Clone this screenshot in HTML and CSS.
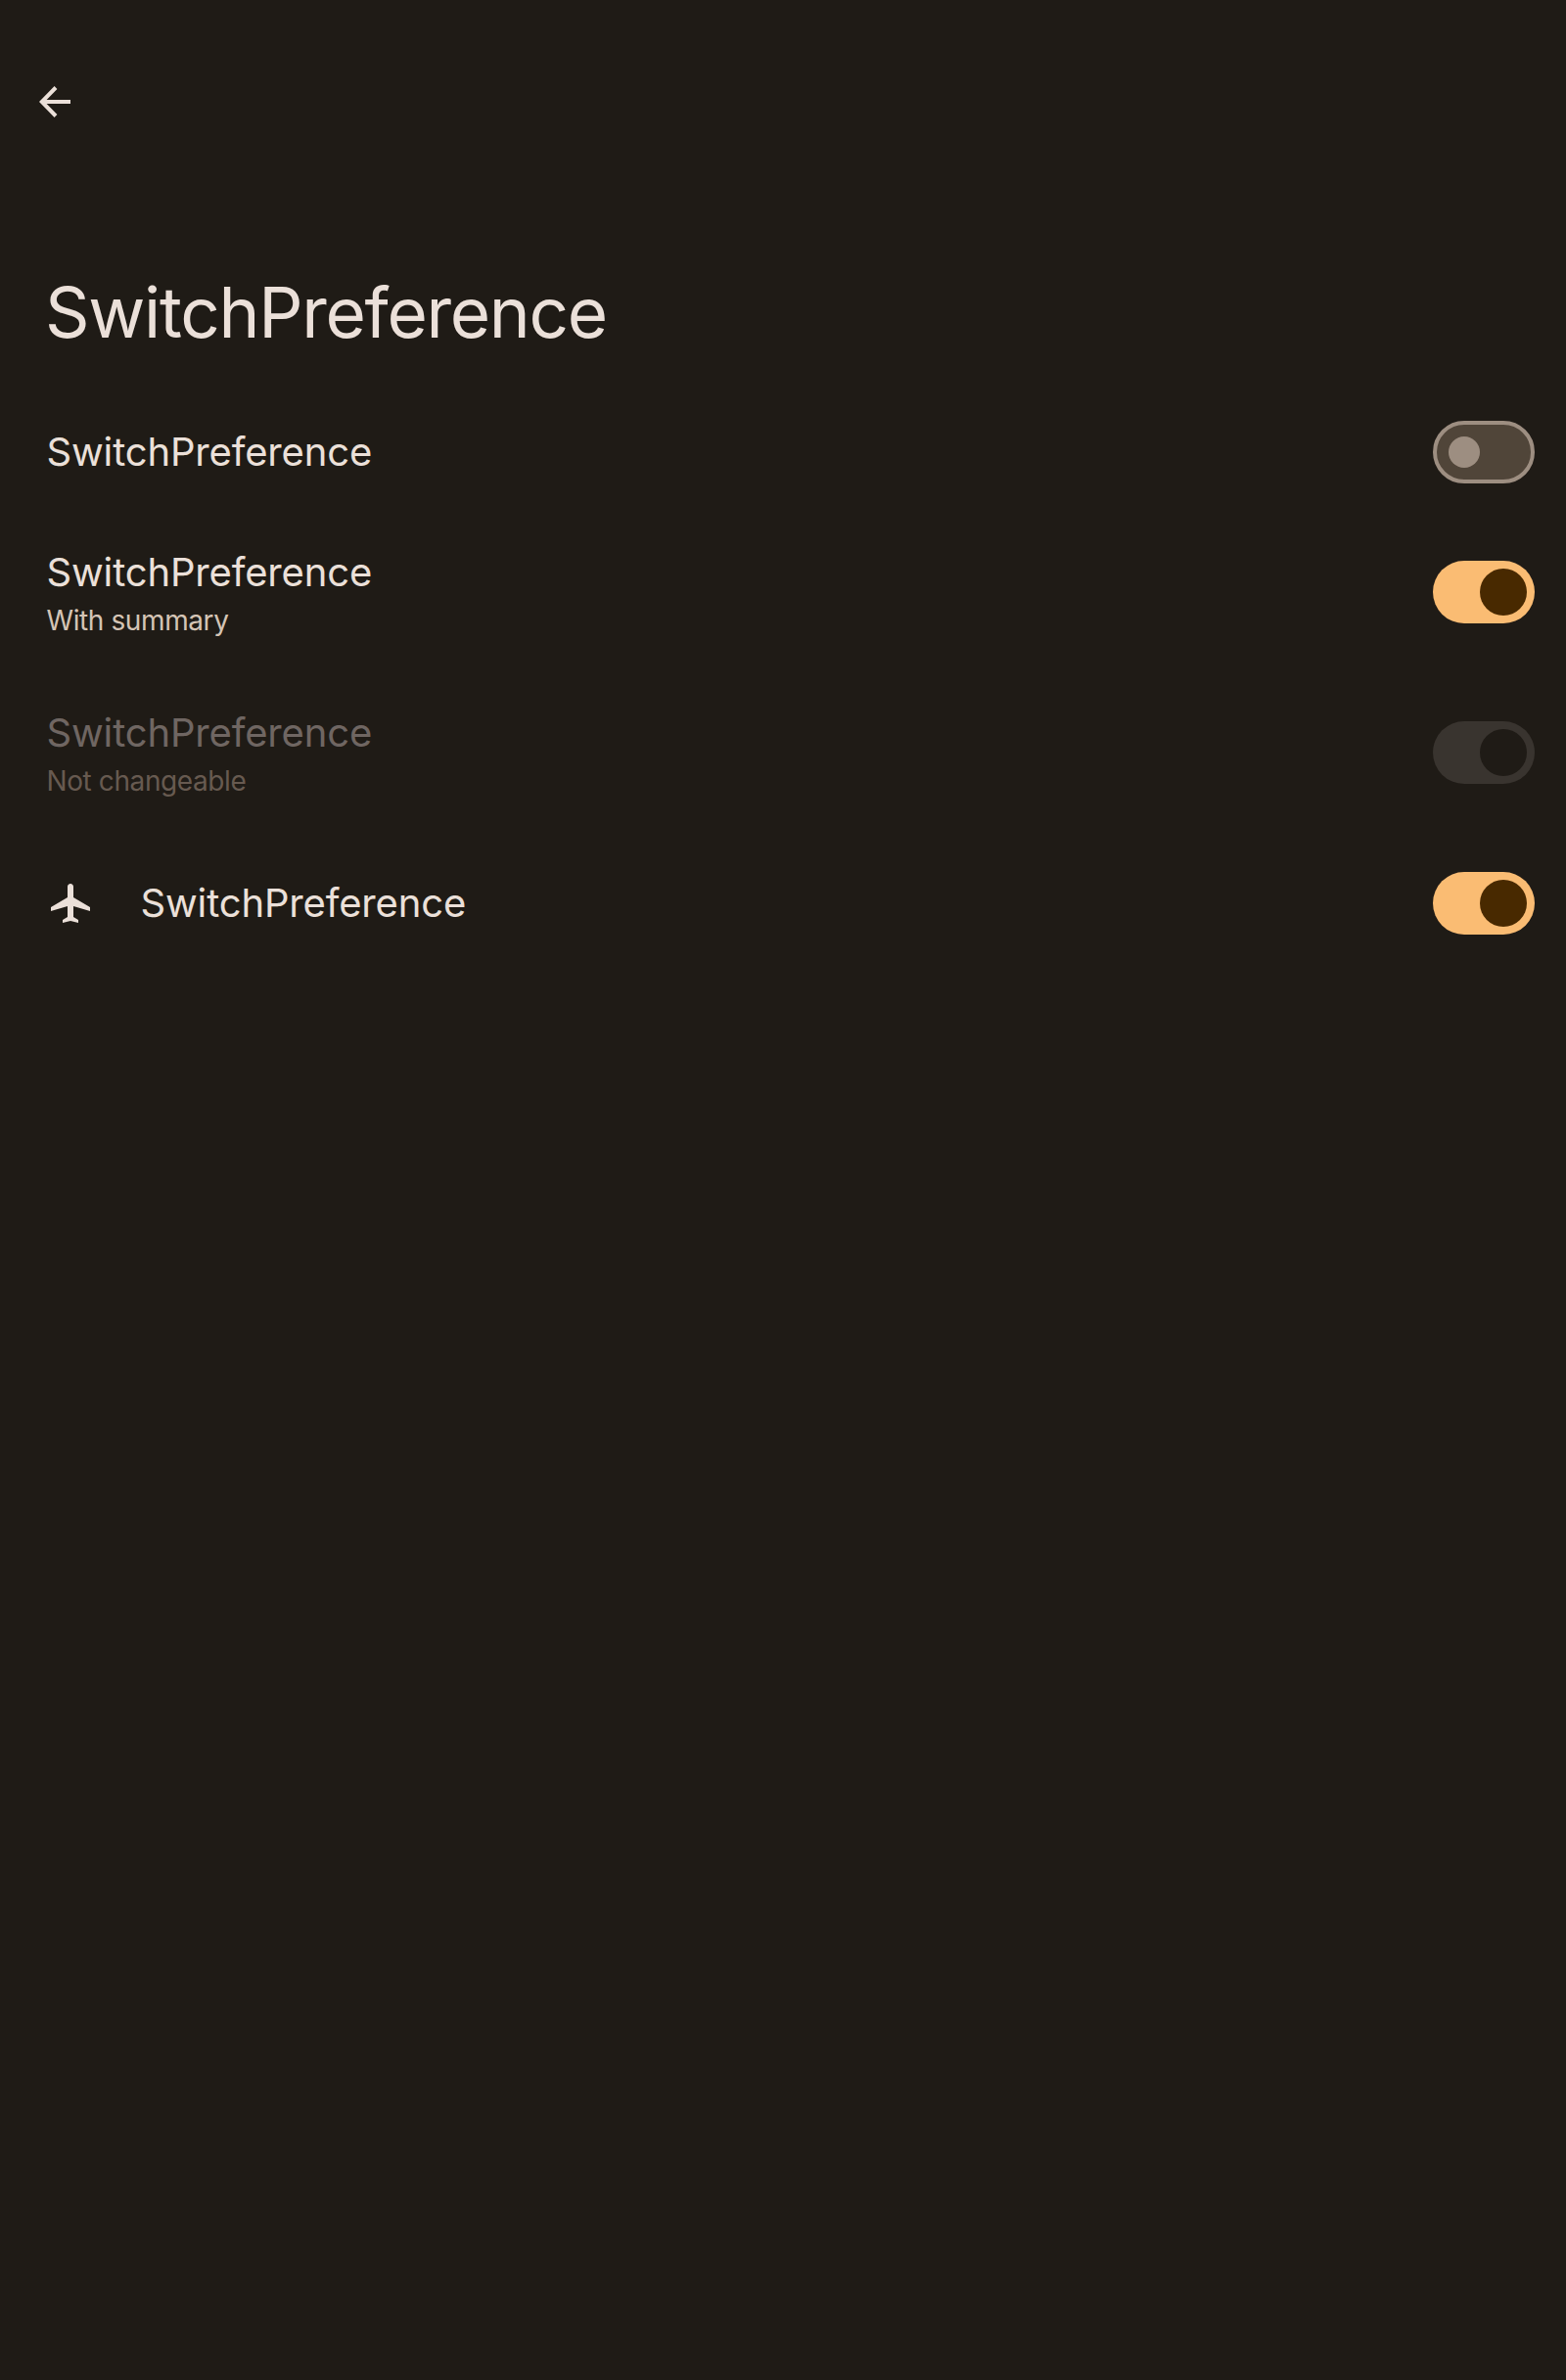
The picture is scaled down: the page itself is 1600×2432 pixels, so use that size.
FILE: index.html
```html
<!DOCTYPE html>
<html lang="en">
<head>
<meta charset="utf-8">
<title>SwitchPreference</title>
<link rel="stylesheet" href="styles.css">
</head>
<body>
<header class="toolbar">
  <svg class="back" viewBox="0 0 32 32"><path d="M17 1.500 2.800 16 17 30.500M3 16H32" fill="none" stroke="currentColor" stroke-width="4"/></svg>
</header>
<h1 class="title"><span>SwitchPreference</span></h1>
<main class="list">
  <div class="row first">
    <div class="text"><div class="name"><span>SwitchPreference</span></div></div>
    <div class="switch off"><i class="thumb"></i></div>
  </div>
  <div class="row second">
    <div class="text"><div class="name"><span>SwitchPreference</span></div><div class="summary"><span>With summary</span></div></div>
    <div class="switch"><i class="thumb"></i></div>
  </div>
  <div class="row disabled">
    <div class="text"><div class="name"><span>SwitchPreference</span></div><div class="summary"><span>Not changeable</span></div></div>
    <div class="switch"><i class="thumb"></i></div>
  </div>
  <div class="row last">
    <svg class="plane" viewBox="0 0 24 24"><path fill="currentColor" d="M22 16v-2l-8.500-5V3.500C13.500 2.670 12.830 2 12 2s-1.500.670-1.500 1.500V9L2 14v2l8.500-2.500V19L8 20.500V22l4-1 4 1v-1.500L13.500 19v-5.500L22 16z"/></svg>
    <div class="text"><div class="name"><span>SwitchPreference</span></div></div>
    <div class="switch"><i class="thumb"></i></div>
  </div>
</main>
</body>
</html>
```
FILE: styles.css
```css
* { box-sizing: border-box; }
body {
  margin: 0;
  min-height: 2432px;
  background: #1f1b16;
  color: #ebe0d9;
  font-family: Inter, "Open Sans", sans-serif;
}
.toolbar { height: 280px; padding: 88px 40px 0; }
.back { display: block; width: 32px; height: 32px; }
.title {
  height: 130px;
  margin: 0;
  padding-left: 46px;
  font-size: 71px;
  font-weight: 400;
  line-height: 78px;
  letter-spacing: -1.3px;
  white-space: nowrap;
}
.row { display: flex; align-items: center; padding: 0 32px 0 47.500px; }
.first { height: 104px; }
.first .text { padding-bottom: 1px; }
.second { height: 182px; }
.disabled { height: 146px; }
.last { height: 162px; }
.text { flex: 1; }
.second .text, .disabled .text { padding-top: 3px; }
.name { font-size: 40px; line-height: 52px; letter-spacing: -.15px; white-space: nowrap; }
.summary { font-size: 28px; line-height: 40px; padding-top: 3px; color: #d4c4b5; letter-spacing: -.4px; }
.disabled .name { color: #6f6662; }
.disabled .summary { color: #675a50; }
.switch {
  display: flex;
  align-items: center;
  justify-content: flex-end;
  width: 104px;
  height: 64px;
  padding: 0 8px;
  border-radius: 32px;
  background: #fabc73;
}
.thumb { width: 48px; height: 48px; border-radius: 50%; background: #482900; }
.off { justify-content: flex-start; padding: 0 12px; border: 4px solid #9d8e81; background: #504539; }
.off .thumb { width: 32px; height: 32px; background: #9d8e81; }
.disabled .switch { background: #39342f; }
.disabled .thumb { background: #1f1b16; }
.plane { width: 48px; height: 48px; margin-right: 48px; }
```
